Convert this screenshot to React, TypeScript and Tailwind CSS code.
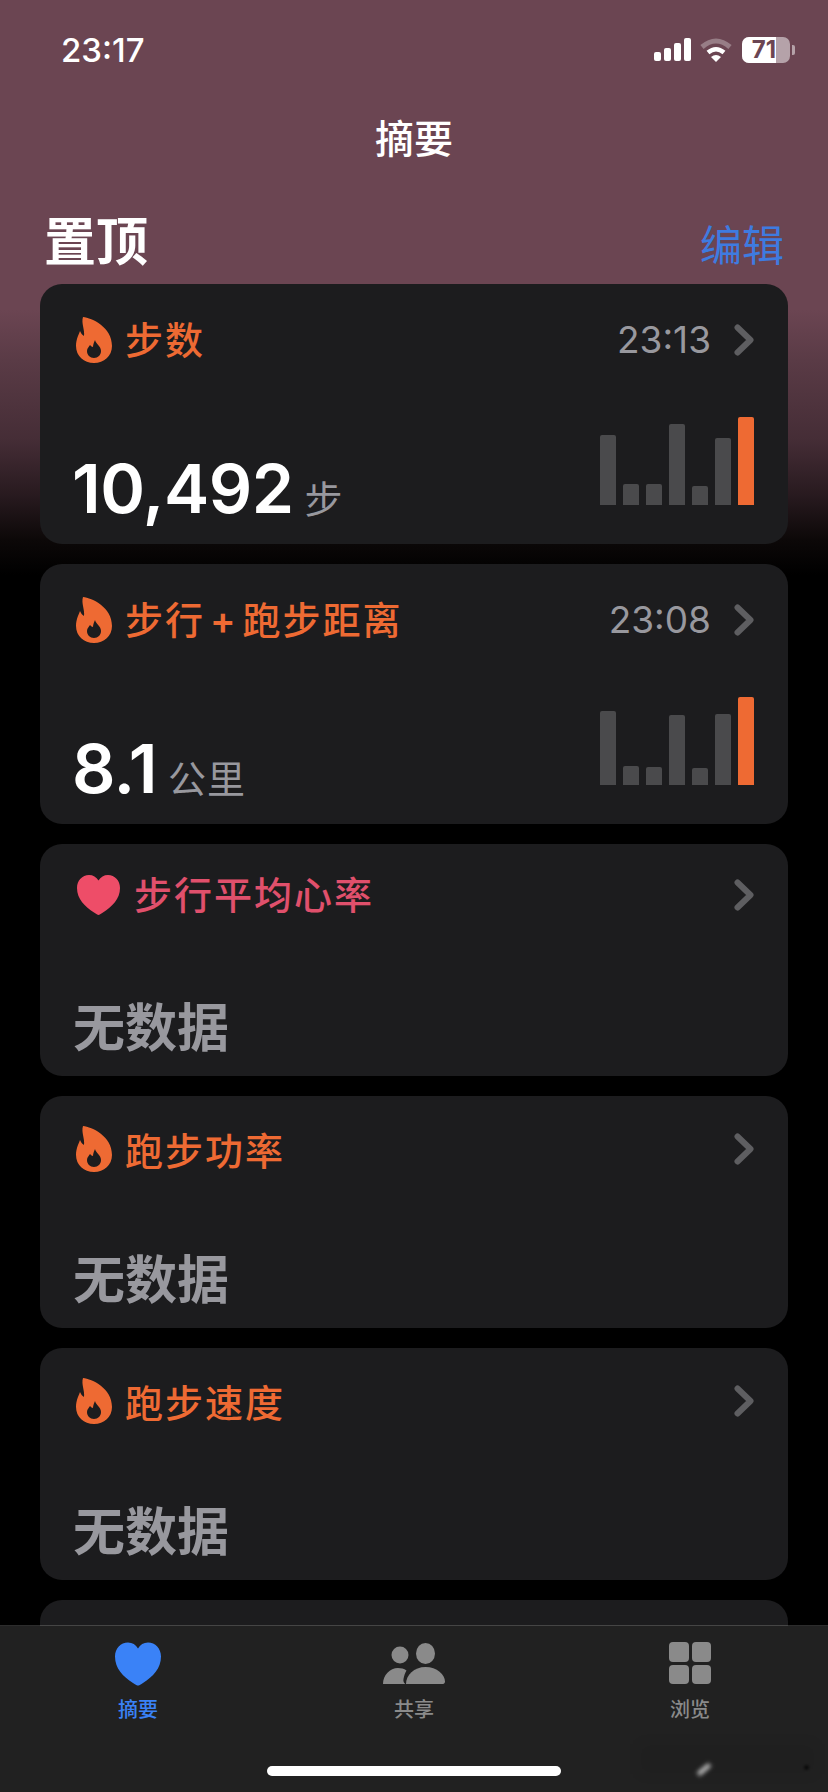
import type { ReactNode } from "react";

const CJK = "font-['Inter','Noto_Sans_CJK_SC',sans-serif]";

function Flame() {
  return (
    <svg width="36" height="46" viewBox="0 0 36 46" className="shrink-0">
      <path
        fillRule="evenodd"
        fill="#ee6a33"
        d="M7 0C16 1 36 10 36 29C36 39 28 46 18 46C8 46 0 39 0 29C0 22 3 17 4 14C5 16 6 18 8 19C9 13 5 6 7 0ZM19 23C20 27 25 29 25 34C25 38 22 41 18 41C14 41 11 38 11 34C11 31 13 30 14 28C15 29 16 30 17 30C17 28 18 25 19 23Z"
      />
    </svg>
  );
}

function Heart() {
  return (
    <svg width="43" height="40" viewBox="0 0 43 40" className="ml-[1px] shrink-0">
      <path
        fill="#ee4d68"
        d="M21.5 40C20.5 40 19.5 39.3 17 37.6C8 31.5 0 24 0 13C0 5.5 5.3 0 12 0C16 0 19.4 2 21.5 5.6C23.6 2 27 0 31 0C37.7 0 43 5.5 43 13C43 24 35 31.5 26 37.6C23.5 39.3 22.5 40 21.5 40Z"
      />
    </svg>
  );
}

function Chevron() {
  return (
    <svg width="20" height="32" viewBox="0 0 20 32" className="shrink-0">
      <path d="M3.5 3.5L16.5 16L3.5 28.5" fill="none" stroke="#5e5e61" strokeWidth="6" strokeLinecap="round" strokeLinejoin="round" />
    </svg>
  );
}

function Bars({ data }: { data: number[] }) {
  return (
    <div className="mb-[39px] flex items-end gap-[7px] self-end">
      {data.map((h, i) => (
        <div
          key={i}
          className={i === data.length - 1 ? "w-[16px] rounded-t-[2px] bg-[#ee6a33]" : "w-[16px] rounded-t-[2px] bg-[#4a4a4c]"}
          style={{ height: h }}
        />
      ))}
    </div>
  );
}

function MetricCard({
  title,
  time,
  value,
  unit,
  bars,
}: {
  title: ReactNode;
  time: string;
  value: string;
  unit: string;
  bars: number[];
}) {
  return (
    <div className="h-[260px] rounded-[22px] bg-[#1c1c1e] pl-[36px] pr-[34px]">
      <div className="flex h-[112px] items-center">
        <Flame />
        <span className="ml-[13px] text-[38px] font-medium tracking-[2px] text-[#ee6a33]">{title}</span>
        <span className="ml-auto mr-[23px] text-[37px] text-[#98989e]">{time}</span>
        <Chevron />
      </div>
      <div className="flex h-[148px] items-start justify-between">
        <div className="-ml-[4px] mt-[52px] flex items-baseline">
          <span className="text-[68px] leading-[80px] font-semibold tracking-[-0.5px] text-white">{value}</span>
          <span className="ml-[11px] text-[38px] tracking-[1px] text-[#98989e]">{unit}</span>
        </div>
        <Bars data={bars} />
      </div>
    </div>
  );
}

function EmptyCard({ title, heart }: { title: string; heart?: boolean }) {
  return (
    <div className="h-[232px] rounded-[22px] bg-[#1c1c1e] pl-[36px] pr-[34px]">
      <div className={heart ? "flex h-[102px] items-center" : "flex h-[106px] items-center"}>
        {heart ? <Heart /> : <Flame />}
        <span className={heart ? "ml-[14px] text-[38px] font-medium tracking-[2px] text-[#e0506c]" : "ml-[13px] pt-[4px] text-[38px] font-medium tracking-[2px] text-[#ee6a33]"}>
          {title}
        </span>
        <span className="ml-auto">
          <Chevron />
        </span>
      </div>
      <div className={heart ? "-ml-[3px] mt-[53px] text-[52px] leading-[60px] font-bold text-[#98989e]" : "-ml-[3px] mt-[49px] text-[52px] leading-[60px] font-bold text-[#98989e]"}>
        无数据
      </div>
    </div>
  );
}

function StatusBar() {
  return (
    <div className="flex h-[100px] items-start justify-between pl-[61px] pr-[33px] pt-[32px]">
      <span className="text-[33px] leading-[36px] font-medium text-white">23:17</span>
      <div className="flex items-center gap-[9px] pt-[5px]">
        <svg width="37" height="24" viewBox="0 0 37 24">
          <rect x="0" y="14" width="7" height="9" rx="2" fill="#fff" />
          <rect x="10" y="10" width="7" height="13" rx="2" fill="#fff" />
          <rect x="20" y="5" width="7" height="18" rx="2" fill="#fff" />
          <rect x="30" y="0" width="7" height="23" rx="2" fill="#fff" />
        </svg>
        <svg width="32" height="24" viewBox="0 0 32 24">
          <path d="M2 9Q16 -3 30 9" fill="none" stroke="#fff" strokeOpacity="0.3" strokeWidth="5" />
          <path d="M8 14.5Q16 8 24 14.5" fill="none" stroke="#fff" strokeWidth="4.5" />
          <path d="M16 24L11 19Q16 15 21 19Z" fill="#fff" />
        </svg>
        <div className="ml-[1px] flex h-[26px] w-[48px] items-center rounded-[7px] bg-white/50">
          <div className="flex h-full w-[34px] items-center justify-end rounded-l-[7px] bg-white">
            <span className="text-[24px] leading-[26px] font-bold text-[#6b4552]">71</span>
          </div>
        </div>
        <div className="-ml-[7px] h-[10px] w-[3px] rounded-r-[2px] bg-white/50" />
      </div>
    </div>
  );
}

function TabBar() {
  return (
    <div className="absolute inset-x-0 bottom-0 h-[167px] border-t border-[#2c2c2c] bg-[#212121]">
      <div className="absolute left-[40px] right-[40px] -top-px h-px bg-[#454545]" />
      <div className="grid grid-cols-3 pt-[16px]">
        <div className="flex flex-col items-center">
          <svg width="46" height="43" viewBox="0 0 46 43" className="h-[44px]">
            <path
              fill="#3a82f7"
              d="M23 43C22 43 21 42.3 18 40.4C8 34 0 26 0 14C0 6 5.7 0 13 0C17.4 0 20.8 2.2 23 6C25.2 2.2 28.6 0 33 0C40.3 0 46 6 46 14C46 26 38 34 28 40.4C25 42.3 24 43 23 43Z"
            />
          </svg>
          <span className="mt-[12px] text-[20px] leading-[24px] font-medium text-[#3a82f7]">摘要</span>
        </div>
        <div className="flex flex-col items-center">
          <svg width="62" height="44" viewBox="0 0 62 44" className="h-[44px]">
            <circle cx="17" cy="13" r="8.5" fill="#8a8a8a" />
            <ellipse cx="42.5" cy="11.5" rx="9.5" ry="10.5" fill="#8a8a8a" />
            <path d="M0 42C0 33 7 26 15 26C18 26 21 26.7 23.5 28.5C22 31 21 34 20.5 37C20 39 21 41 22.2 42Z" fill="#8a8a8a" />
            <path d="M23 42C23 33 31 25 42.5 25C54 25 62 33 62 39.5C62 41 61 42 60 42Z" fill="#8a8a8a" />
          </svg>
          <span className="mt-[12px] text-[20px] leading-[24px] font-medium text-[#8a8a8a]">共享</span>
        </div>
        <div className="flex flex-col items-center">
          <div className="grid h-[44px] w-[42px] grid-cols-2 gap-[3px] pb-[2px]">
            <div className="rounded-[4px] bg-[#8a8a8a]" />
            <div className="rounded-[4px] bg-[#8a8a8a]" />
            <div className="rounded-[4px] bg-[#8a8a8a]" />
            <div className="rounded-[4px] bg-[#8a8a8a]" />
          </div>
          <span className="mt-[12px] text-[20px] leading-[24px] font-medium text-[#8a8a8a]">浏览</span>
        </div>
      </div>
      <div className="absolute bottom-[16px] left-[267px] h-[10px] w-[294px] rounded-full bg-white" />
      {/* blurred watermark corner */}
      <div className="absolute bottom-[20px] left-[696px] h-[5px] w-[16px] -rotate-[40deg] rounded-full bg-white/70 blur-[2px]" />
      <div className="absolute bottom-[22px] left-[804px] h-[5px] w-[5px] rounded-full bg-black/60 blur-[1px]" />
      <div className="absolute bottom-[18px] left-[640px] h-[30px] w-[175px] bg-black/5 blur-[6px]" />
    </div>
  );
}

export default function App() {
  return (
    <div className={`relative h-[1792px] w-[828px] overflow-hidden bg-[linear-gradient(180deg,#6b4552_0px,#6b4552_310px,#5a3b46_360px,#452d36_440px,#281a1f_495px,#0c0808_540px,#000_575px)] ${CJK}`}>
      <StatusBar />
      <div className="flex h-[76px] items-center justify-center pt-[2px] text-[39px] font-medium text-white">摘要</div>
      <div className="flex h-[108px] items-start justify-between px-[44px]">
        <span className="mt-[28px] text-[52px] font-bold text-white">置顶</span>
        <span className="mt-[38px] text-[42px] text-[#3e7be0]">编辑</span>
      </div>
      <div className="flex flex-col gap-[20px] px-[40px]">
        <MetricCard title="步数" time="23:13" value="10,492" unit="步" bars={[70, 21, 21, 81, 19, 67, 88]} />
        <MetricCard
          title={
            <>
              步行<span className="mx-[5px] font-semibold">+</span>跑步距离
            </>
          }
          time="23:08"
          value="8.1"
          unit="公里"
          bars={[74, 19, 18, 70, 17, 71, 88]}
        />
        <EmptyCard title="步行平均心率" heart />
        <EmptyCard title="跑步功率" />
        <EmptyCard title="跑步速度" />
        <div className="h-[232px] rounded-[22px] bg-[#1c1c1e]" />
      </div>
      <TabBar />
    </div>
  );
}
